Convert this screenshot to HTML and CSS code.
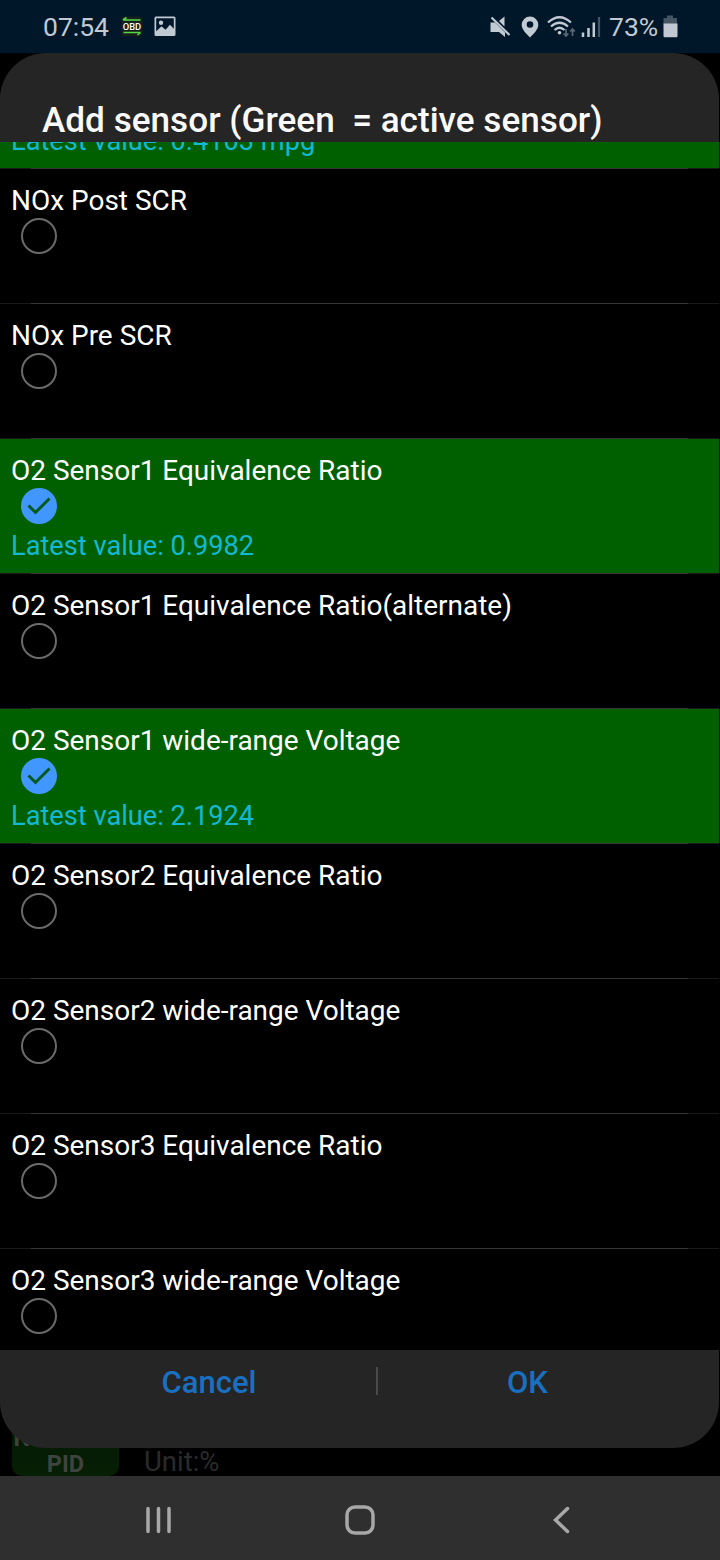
FILE: index.html
```html
<!DOCTYPE html>
<html lang="en">
<head>
    <meta charset="utf-8">
    <title>Add sensor</title>
    <link rel="stylesheet" href="styles.css">
</head>
<body>
    <header class="status-bar">
        <span class="clock">07:54</span>
        <svg class="obd-icon" width="22" height="22" viewBox="0 0 22 22">
            <rect x="0.5" y="0.5" width="21" height="20" rx="3" fill="#16201d"/>
            <path d="M2 4h17.500M5.500 1.500L2 4M2.500 16.500h17M16.500 19l3-2.500" stroke="#55d843" stroke-width="1.600" fill="none"/>
            <text x="11" y="13.500" text-anchor="middle" textLength="18.500" lengthAdjust="spacingAndGlyphs" font-size="9" font-weight="500" fill="#fff">OBD</text>
        </svg>
        <svg class="image-icon" width="22" height="21" viewBox="0 0 22 21">
            <path fill="#c1c9d3" fill-rule="evenodd" d="M2 0.500h18a1.500 1.500 0 0 1 1.500 1.500v16.500a1.500 1.500 0 0 1-1.500 1.500H2A1.500 1.500 0 0 1 .5 18.500V2A1.500 1.500 0 0 1 2 .5zM2.200 2.200v13l5.300-5 4 3.500 4.500-5 3.800 4V2.200z"/>
            <circle cx="7" cy="6.800" r="2.200" fill="#c1c9d3"/>
        </svg>
        <span class="spacer"></span>
        <svg class="mute-icon" width="21" height="22" viewBox="0 0 21 22">
            <path fill="#c1c9d3" d="M0.500 6.500h4.500L15 16.500V21l-6-5H0.500zM9 5l5.500-4.500v10z"/>
            <path d="M1.500 1.500l18 17.500" stroke="#c1c9d3" stroke-width="2.200"/>
        </svg>
        <svg class="pin-icon" width="18" height="22" viewBox="0 0 18 22">
            <path fill="#c1c9d3" fill-rule="evenodd" d="M9 0.500a8.300 8.300 0 0 1 8.300 8.300c0 5-4.500 8.500-8.300 12.700C5.200 17.300.7 13.800.7 8.800A8.300 8.300 0 0 1 9 .5zm0 4.700a3.300 3.300 0 1 0 0 6.600 3.300 3.300 0 0 0 0-6.600z"/>
        </svg>
        <svg class="wifi-icon" width="29" height="24" viewBox="0 0 29 24">
            <path d="M1 7.500q11.500-10.500 23 0M4 11.500q8.500-7.500 17 0M7.500 15q5-4.500 10 0" stroke="#c1c9d3" stroke-width="2.200" fill="none"/>
            <circle cx="12.500" cy="17.700" r="1.800" fill="#c1c9d3"/>
            <path d="M19 14v7M16.700 18.500l2.300 2.500 2.300-2.500M25.500 21v-7M23.200 16.500l2.300-2.500 2.300 2.500" stroke="#5a6876" stroke-width="1.700" fill="none"/>
        </svg>
        <svg class="signal-icon" width="20" height="22" viewBox="0 0 20 22">
            <path d="M2 16.500v4.500M7.500 12v9M12.800 6.500V21" stroke="#c1c9d3" stroke-width="2.500"/>
            <path d="M18 1v20" stroke="#465564" stroke-width="2.200"/>
        </svg>
        <span class="percent">73%</span>
        <svg class="battery-icon" width="15" height="23" viewBox="0 0 15 23">
            <path fill="#465564" d="M4 0.500h6V3h4v6H0.500V3H4z"/>
            <path fill="#c1c9d3" d="M0.500 8.500h14V21a1.200 1.200 0 0 1-1.200 1.200H1.700A1.200 1.200 0 0 1 .5 21z"/>
        </svg>
    </header>

    <main class="screen">
        <div class="dialog">
            <h1>Add sensor (Green&nbsp; = active sensor)</h1>
            <ul class="sensors">
                <li class="sensor active">
                    <div class="check"></div>
                    <div class="value">Latest value: 0.4103 mpg</div>
                </li>
                <li class="sensor">
                    <div class="name">NOx Post SCR</div>
                    <div class="check"></div>
                </li>
                <li class="sensor">
                    <div class="name">NOx Pre SCR</div>
                    <div class="check"></div>
                </li>
                <li class="sensor active">
                    <div class="name">O2 Sensor1 Equivalence Ratio</div>
                    <div class="check checked"><svg viewBox="0 0 36 36"><path d="M7.500 17.500l7 7L28.500 10.500"/></svg></div>
                    <div class="value">Latest value: 0.9982</div>
                </li>
                <li class="sensor">
                    <div class="name">O2 Sensor1 Equivalence Ratio(alternate)</div>
                    <div class="check"></div>
                </li>
                <li class="sensor active">
                    <div class="name">O2 Sensor1 wide-range Voltage</div>
                    <div class="check checked"><svg viewBox="0 0 36 36"><path d="M7.500 17.500l7 7L28.500 10.500"/></svg></div>
                    <div class="value">Latest value: 2.1924</div>
                </li>
                <li class="sensor">
                    <div class="name">O2 Sensor2 Equivalence Ratio</div>
                    <div class="check"></div>
                </li>
                <li class="sensor">
                    <div class="name">O2 Sensor2 wide-range Voltage</div>
                    <div class="check"></div>
                </li>
                <li class="sensor">
                    <div class="name">O2 Sensor3 Equivalence Ratio</div>
                    <div class="check"></div>
                </li>
                <li class="sensor">
                    <div class="name">O2 Sensor3 wide-range Voltage</div>
                    <div class="check"></div>
                </li>
            </ul>
            <div class="buttons">
                <button type="button" class="cancel">Cancel</button>
                <span class="separator"></span>
                <button type="button" class="ok">OK</button>
            </div>
        </div>
        <!-- dimmed page behind the dialog -->
        <div class="behind">
            <div class="pid">No values<br>PID</div>
            <div class="unit">Unit:%</div>
        </div>
    </main>

    <nav class="nav-bar">
        <svg width="28" height="28" viewBox="0 0 28 28"><path d="M4 2.500v23M14.500 2.500v23M25 2.500v23"/></svg>
        <svg width="30" height="30" viewBox="0 0 30 30"><rect x="2" y="2" width="26" height="26" rx="8"/></svg>
        <svg width="18" height="28" viewBox="0 0 18 28"><path d="M14.500 2.500L2.500 14l12 11.500"/></svg>
    </nav>
</body>
</html>
```
FILE: styles.css
```css
body {
    margin: 0;
    width: 720px;
    height: 1560px;
    overflow: hidden;
    background-color: #000;
    font-family: Roboto, sans-serif;
}
.status-bar {
    display: flex;
    align-items: center;
    height: 53px;
    padding: 0 43px;
    box-sizing: border-box;
    background-color: #001629;
    color: #c1c9d3;
    font-size: 26.5px;
}
.spacer {
    flex: 1;
}
.clock {
    width: 65px;
}
.obd-icon {
    margin-left: 13px;
}
.image-icon {
    margin-left: 11px;
}
.pin-icon {
    margin-left: 10px;
}
.wifi-icon {
    margin-left: 8px;
}
.signal-icon {
    margin-left: 5px;
}
.percent {
    width: 49px;
    margin-left: 8px;
}
.battery-icon {
    margin-left: 5px;
    margin-right: -1px;
}
.screen {
    height: 1423px;
    overflow: hidden;
}
.dialog {
    position: relative;
    z-index: 1;
    width: 719px;
    height: 1395px;
    overflow: hidden;
    border-radius: 46px;
    background-color: #252525;
}
h1 {
    height: 89px;
    margin: 0;
    padding: 47px 0 0 42px;
    box-sizing: border-box;
    color: #fafafa;
    font-size: 35.15px;
    font-weight: 500;
    line-height: 41px;
    white-space: nowrap;
}
.sensors {
    display: flex;
    flex-direction: column;
    height: 1208px;
    margin: 0;
    padding: 0;
    overflow: hidden;
    background-color: #000;
    list-style: none;
}
.sensor {
    flex: none;
    height: 135px;
    padding: 15px 11px 0;
    box-sizing: border-box;
    background: linear-gradient(90deg, #191919 31px, #363636 31px, #363636 688px, #191919 688px) top / 100% 1px no-repeat;
}
/* the list is scrolled, only the last line of this row shows */
.sensor:first-child {
    margin-top: -109px;
    padding-top: 50px;
}
.sensor.active {
    background-color: #006000;
}
.name {
    height: 35px;
    color: #fff;
    font-size: 27.98px;
    line-height: 36px;
    white-space: nowrap;
}
.check {
    width: 36px;
    height: 36px;
    margin-left: 10px;
    box-sizing: border-box;
    border: 2px solid #6a6a6a;
    border-radius: 50%;
}
.check.checked {
    border: none;
    background-color: #4297ff;
}
.check svg {
    display: block;
}
.check path {
    fill: none;
    stroke: #005a20;
    stroke-width: 3;
}
.value {
    margin-top: 4px;
    color: #14b8d4;
    font-size: 27.2px;
    line-height: 36px;
}
.buttons {
    display: flex;
    align-items: center;
    height: 62px;
}
button {
    padding: 2px 0 0;
    border: none;
    background: none;
    color: #1a70c0;
    font-family: inherit;
    font-size: 31px;
    font-weight: 500;
}
.cancel {
    width: 334px;
    margin-left: 42px;
}
.separator {
    width: 2px;
    height: 28px;
    background-color: #4a4a4a;
}
.ok {
    width: 299px;
}
.behind {
    display: flex;
    height: 100px;
    margin-top: -72px;
}
.pid {
    width: 107px;
    height: 100px;
    margin-left: 12px;
    padding-top: 49px;
    box-sizing: border-box;
    border-radius: 10px;
    background: linear-gradient(#041302, #061f05);
    color: #3d443d;
    font-size: 23.5px;
    font-weight: 700;
    line-height: 26px;
    text-align: center;
    white-space: nowrap;
}
.unit {
    margin: 70px 0 0 25px;
    color: #2b2b2b;
    font-size: 27.5px;
    line-height: 32px;
}
.nav-bar {
    display: grid;
    grid-template-columns: 202px 202px 202px;
    justify-content: center;
    justify-items: center;
    height: 84px;
    align-items: center;
    padding: 4px 0 0;
    box-sizing: border-box;
    background-color: #2f2f2f;
}
.nav-bar svg {
    fill: none;
    stroke: #a8a8a8;
    stroke-width: 3.5;
    stroke-linecap: round;
}
```
